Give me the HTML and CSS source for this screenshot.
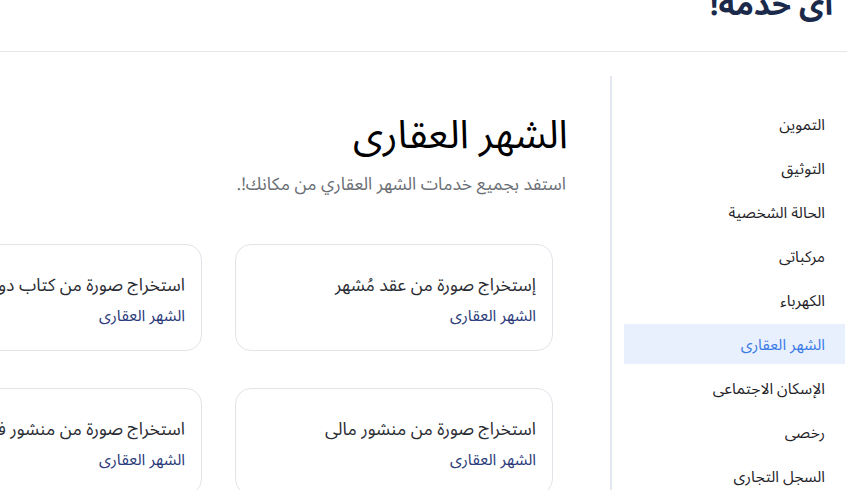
FILE: index.html
```html
<!DOCTYPE html>
<html lang="ar" dir="rtl">
<head>
<meta charset="utf-8">
<link rel="stylesheet" href="styles.css">
</head>
<body>
<header class="top">
  <h1 class="top-title">اى خدمة!</h1>
</header>
<div class="layout">
  <aside class="side">
    <ul class="side-list">
      <li class="side-item">التموين</li>
      <li class="side-item">التوثيق</li>
      <li class="side-item">الحالة الشخصية</li>
      <li class="side-item">مركباتى</li>
      <li class="side-item">الكهرباء</li>
      <li class="side-item active">الشهر العقارى</li>
      <li class="side-item">الإسكان الاجتماعى</li>
      <li class="side-item">رخصى</li>
      <li class="side-item">السجل التجارى</li>
    </ul>
  </aside>
  <main class="main">
    <h2 class="title">الشهر العقارى</h2>
    <p class="subtitle">استفد بجميع خدمات الشهر العقاري من مكانك!.</p>
    <div class="cards">
      <div class="card"><div class="card-title">إستخراج صورة من عقد مُشهر</div><div class="card-sub">الشهر العقارى</div></div>
      <div class="card"><div class="card-title">استخراج صورة من كتاب دورى</div><div class="card-sub">الشهر العقارى</div></div>
      <div class="card"><div class="card-title">استخراج صورة من منشور مالى</div><div class="card-sub">الشهر العقارى</div></div>
      <div class="card"><div class="card-title">استخراج صورة من منشور فنى</div><div class="card-sub">الشهر العقارى</div></div>
    </div>
  </main>
</div>
</body>
</html>
```
FILE: styles.css
```css
html, body {
  margin: 0;
  padding: 0;
  background: #ffffff;
  overflow: hidden;
}
body {
  font-family: "Noto Sans Arabic UI", "Noto Sans Arabic", "Noto Sans", sans-serif;
  width: 847px;
  height: 490px;
}
.top {
  height: 51px;
  border-bottom: 1px solid #e5e7eb;
  display: flex;
  align-items: flex-start;
  overflow: hidden;
}
.top-title {
  margin: -12px 14px 0 0;
  font-size: 31px;
  font-weight: 700;
  line-height: 31px;
  color: #1b2a4a;
}
.layout {
  display: flex;
  flex-direction: row;
  margin-top: 24px;
}
.side {
  width: 221px;
  flex: none;
  border-left: 2px solid #e3e7f0;
  padding: 28px 2px 0 12px;
}
.side-list {
  list-style: none;
  margin: 0;
  padding: 0;
  display: flex;
  flex-direction: column;
  gap: 4px;
}
.side-item {
  height: 40px;
  line-height: 40px;
  padding-right: 20px;
  font-size: 15.5px;
  color: #1f2328;
}
.side-item.active {
  background: #e8f0fd;
  color: #3b7be8;
}
.main {
  flex: 1;
  padding: 0 42px 0 0;
  min-width: 0;
}
.title {
  margin: 33px 0 0 0;
  font-size: 39.5px;
  font-weight: 400;
  line-height: 48px;
  color: #000;
}
.subtitle {
  margin: 14px 2px 0 0;
  font-size: 17.5px;
  line-height: 24px;
  color: #6b6f76;
}
.cards {
  display: grid;
  grid-template-columns: 318px 318px;
  column-gap: 33px;
  row-gap: 37px;
  margin: 49px 15px 0 0;
}
.card {
  height: 107px;
  box-sizing: border-box;
  border: 1px solid #e2e4ea;
  border-radius: 16px;
  padding: 27px 16px 0 16px;
}
.card-title {
  font-size: 17.5px;
  line-height: 24px;
  color: #2a2d33;
  white-space: nowrap;
}
.card-sub {
  margin-top: 9px;
  font-size: 15.8px;
  line-height: 20px;
  color: #2b3a7a;
}
```
